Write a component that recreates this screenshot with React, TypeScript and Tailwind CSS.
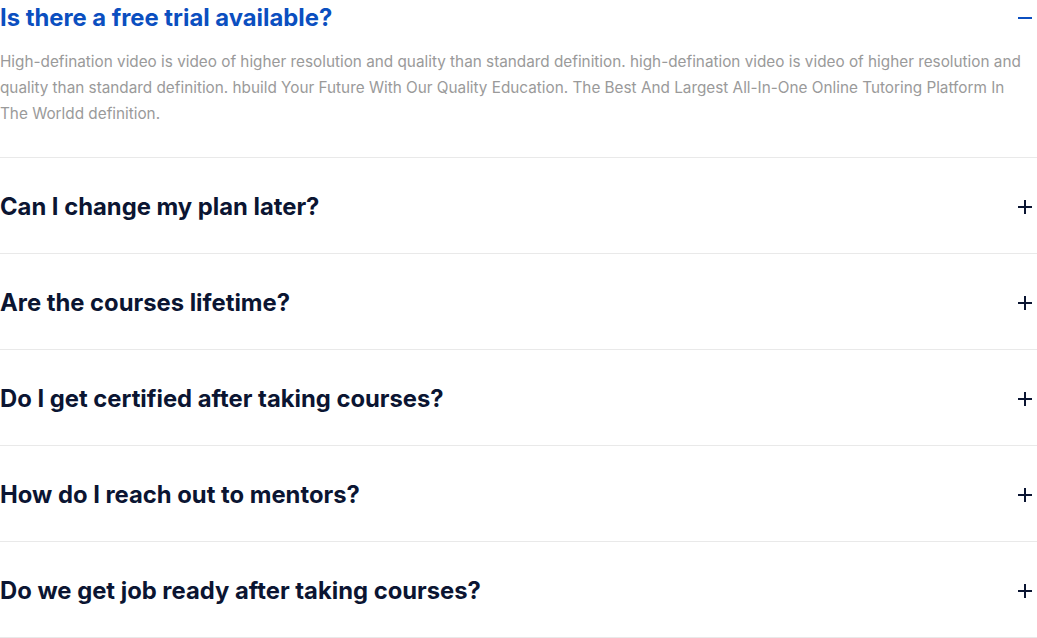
import React from "react";

const items = [
  "Can I change my plan later?",
  "Are the courses lifetime?",
  "Do I get certified after taking courses?",
  "How do I reach out to mentors?",
  "Do we get job ready after taking courses?",
];

function Plus() {
  return (
    <svg width="16" height="16" viewBox="0 0 16 16" className="shrink-0">
      <path d="M8 1v14M1 8h14" stroke="#0b1532" strokeWidth="2" />
    </svg>
  );
}

function Minus() {
  return (
    <svg width="16" height="16" viewBox="0 0 16 16" className="shrink-0">
      <path d="M1 8h14" stroke="#0b4fc0" strokeWidth="2" />
    </svg>
  );
}

export default function App() {
  return (
    <div className="w-[1037px] bg-white" style={{ fontFamily: "Inter, 'Noto Sans', sans-serif" }}>
      <div className="border-b border-[#e9e9e9] pb-[30px]">
        <div className="flex items-center justify-between pr-[4px] pt-[3px]">
          <h3 className="text-[23.8px] leading-[30px] font-bold text-[#0b4fc0]">
            Is there a free trial available?
          </h3>
          <Minus />
        </div>
        <p className="mt-[16px] pr-[12px] text-[15.3px] leading-[26px] text-[#9a9a9a]">
          High-defination video is video of higher resolution and quality than standard definition. high-defination video is video of higher resolution and quality than standard definition. hbuild Your Future With Our Quality Education. The Best And Largest All-In-One Online Tutoring Platform In The Worldd definition.
        </p>
      </div>
      {items.map((t) => (
        <div key={t} className="flex items-center justify-between border-b border-[#e9e9e9] h-[96px] pr-[4px] pt-[2px]">
          <h3 className="text-[23.8px] leading-[30px] font-bold text-[#0b1532]">{t}</h3>
          <Plus />
        </div>
      ))}
    </div>
  );
}
